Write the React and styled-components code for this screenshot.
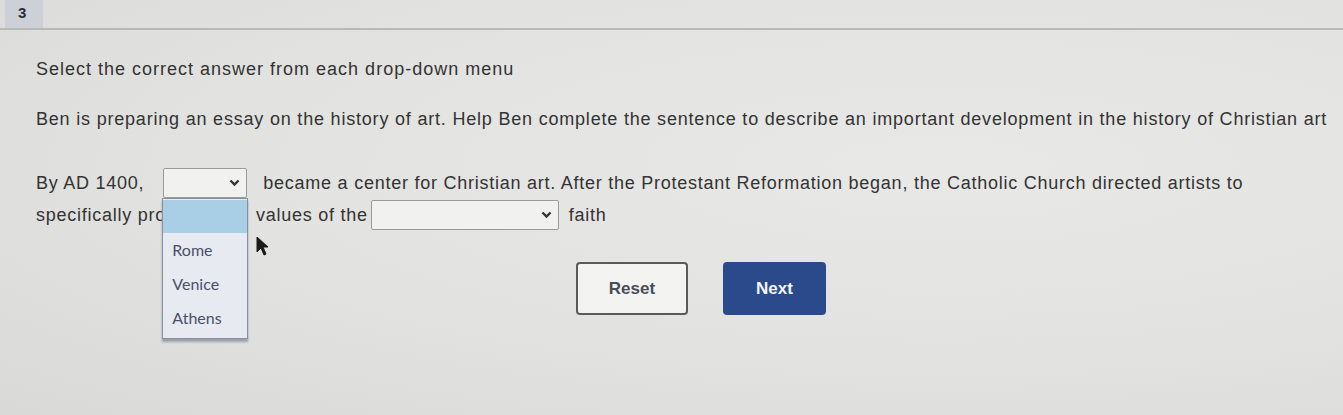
import styled, { createGlobalStyle } from 'styled-components';

const GlobalStyle = createGlobalStyle`
    body {
        margin: 0;
        background-color: #e2e2e0;
        font-family: "Liberation Sans", Arial, sans-serif;
        color: #333333;
    }
`;

const Page = styled.div`
    position: relative;
    width: 1343px;
    height: 415px;
    overflow: hidden;
    background: radial-gradient(ellipse at 70% 40%, #e8e8e6 0%, #e2e2e0 55%, #d9d9d7 100%);
`;

const Header = styled.div`
    display: flex;
    height: 28px;
    border-bottom: 2px solid #b9b9b8;
    padding-left: 5px;
`;

const NumberTab = styled.div`
    width: 38px;
    background-color: #cdd0d6;
    font-weight: bold;
    font-size: 15px;
    color: #2b2d36;
    padding: 4px 0 0 13px;
    box-sizing: border-box;
`;

const Content = styled.div`
    padding: 0 36px;
`;

const Instruction = styled.p`
    margin: 28px 0 0;
    font-size: 18px;
    line-height: 22px;
    letter-spacing: 1px;
`;

const Paragraph = styled.p`
    margin: 28px 0 0;
    font-size: 18px;
    line-height: 22px;
    letter-spacing: 0.8px;
    white-space: nowrap;
`;

const Sentence = styled.div`
    margin-top: 37px;
    font-size: 18px;
    line-height: 32px;
    letter-spacing: 0.75px;
`;

const Line = styled.div`
    display: flex;
    align-items: center;
    height: 32px;
    white-space: nowrap;
`;

const Clipped = styled.span`
    display: inline-block;
    width: ${props => props.width}px;
    margin-right: ${props => props.gap}px;
    overflow: hidden;
`;

const SelectWrap = styled.span`
    position: relative;
    display: inline-flex;
    margin: 0 ${props => props.gap}px 0 ${props => props.lead}px;
`;

const SelectBox = styled.span`
    display: inline-flex;
    align-items: center;
    justify-content: flex-end;
    width: ${props => props.width}px;
    height: 30px;
    box-sizing: border-box;
    border: 1px solid #9a9a9a;
    border-radius: 2px;
    background-color: #f1f1f0;
    padding-right: 6px;
`;

const Chevron = () => (
    <svg width="11" height="8" viewBox="0 0 11 8">
        <path d="M1.5 1.5 L5.5 5.5 L9.5 1.5" fill="none" stroke="#333333" strokeWidth="2.4" />
    </svg>
);

const List = styled.div`
    position: absolute;
    left: -1px;
    top: 30px;
    width: 86px;
    height: 141px;
    box-sizing: border-box;
    border: 1px solid #8a90a0;
    background-color: #e7eaf0;
    box-shadow: 0 3px 2px #9aa0ac;
    padding-top: 1px;
    z-index: 2;
`;

const Highlight = styled.div`
    height: 33px;
    background-color: #a8cfe6;
`;

const Option = styled.div`
    height: 34px;
    line-height: 34px;
    padding-left: 9px;
    font-family: Lato, "Liberation Sans", sans-serif;
    font-size: 16px;
    letter-spacing: 0;
    color: #4a506a;
`;

const Cursor = styled.svg`
    position: absolute;
    left: 256px;
    top: 236px;
`;

const Buttons = styled.div`
    display: flex;
    gap: 35px;
    margin: 31px 0 0 540px;
`;

const Button = styled.button`
    width: ${props => props.width}px;
    height: 53px;
    border-radius: 4px;
    font-family: "Liberation Sans", Arial, sans-serif;
    font-size: 17px;
    font-weight: bold;
    border: 2px solid ${props => props.primary ? '#2b4a8c' : '#5a5a5a'};
    background-color: ${props => props.primary ? '#2b4a8c' : '#f3f3f2'};
    color: ${props => props.primary ? '#f4f6fb' : '#4a4d55'};
`;

const App = () => {
    return (
        <Page>
            <GlobalStyle />
            <Header>
                <NumberTab>3</NumberTab>
            </Header>
            <Content>
                <Instruction>Select the correct answer from each drop-down menu</Instruction>
                <Paragraph>Ben is preparing an essay on the history of art. Help Ben complete the sentence to describe an important development in the history of Christian art</Paragraph>
                <Sentence>
                    <Line>
                        By AD 1400,
                        <SelectWrap lead={19} gap={16}>
                            <SelectBox width={84}><Chevron /></SelectBox>
                            <List>
                                <Highlight />
                                <Option>Rome</Option>
                                <Option>Venice</Option>
                                <Option>Athens</Option>
                            </List>
                        </SelectWrap>
                        became a center for Christian art. After the Protestant Reformation began, the Catholic Church directed artists to
                    </Line>
                    <Line>
                        <Clipped width={213} gap={7}>specifically promote the</Clipped>values of the
                        <SelectWrap lead={3} gap={10}>
                            <SelectBox width={188}><Chevron /></SelectBox>
                        </SelectWrap>
                        faith
                    </Line>
                </Sentence>
                <Buttons>
                    <Button width={112}>Reset</Button>
                    <Button width={103} primary>Next</Button>
                </Buttons>
            </Content>
            <Cursor width="14" height="20" viewBox="0 0 14 20">
                <path d="M1 1 L1 16 L5 12 L8 19 L10 18 L7 11 L12 11 Z" fill="#1a1a1a" stroke="#1a1a1a" strokeWidth="1" />
            </Cursor>
        </Page>
    );
};

export default App;
